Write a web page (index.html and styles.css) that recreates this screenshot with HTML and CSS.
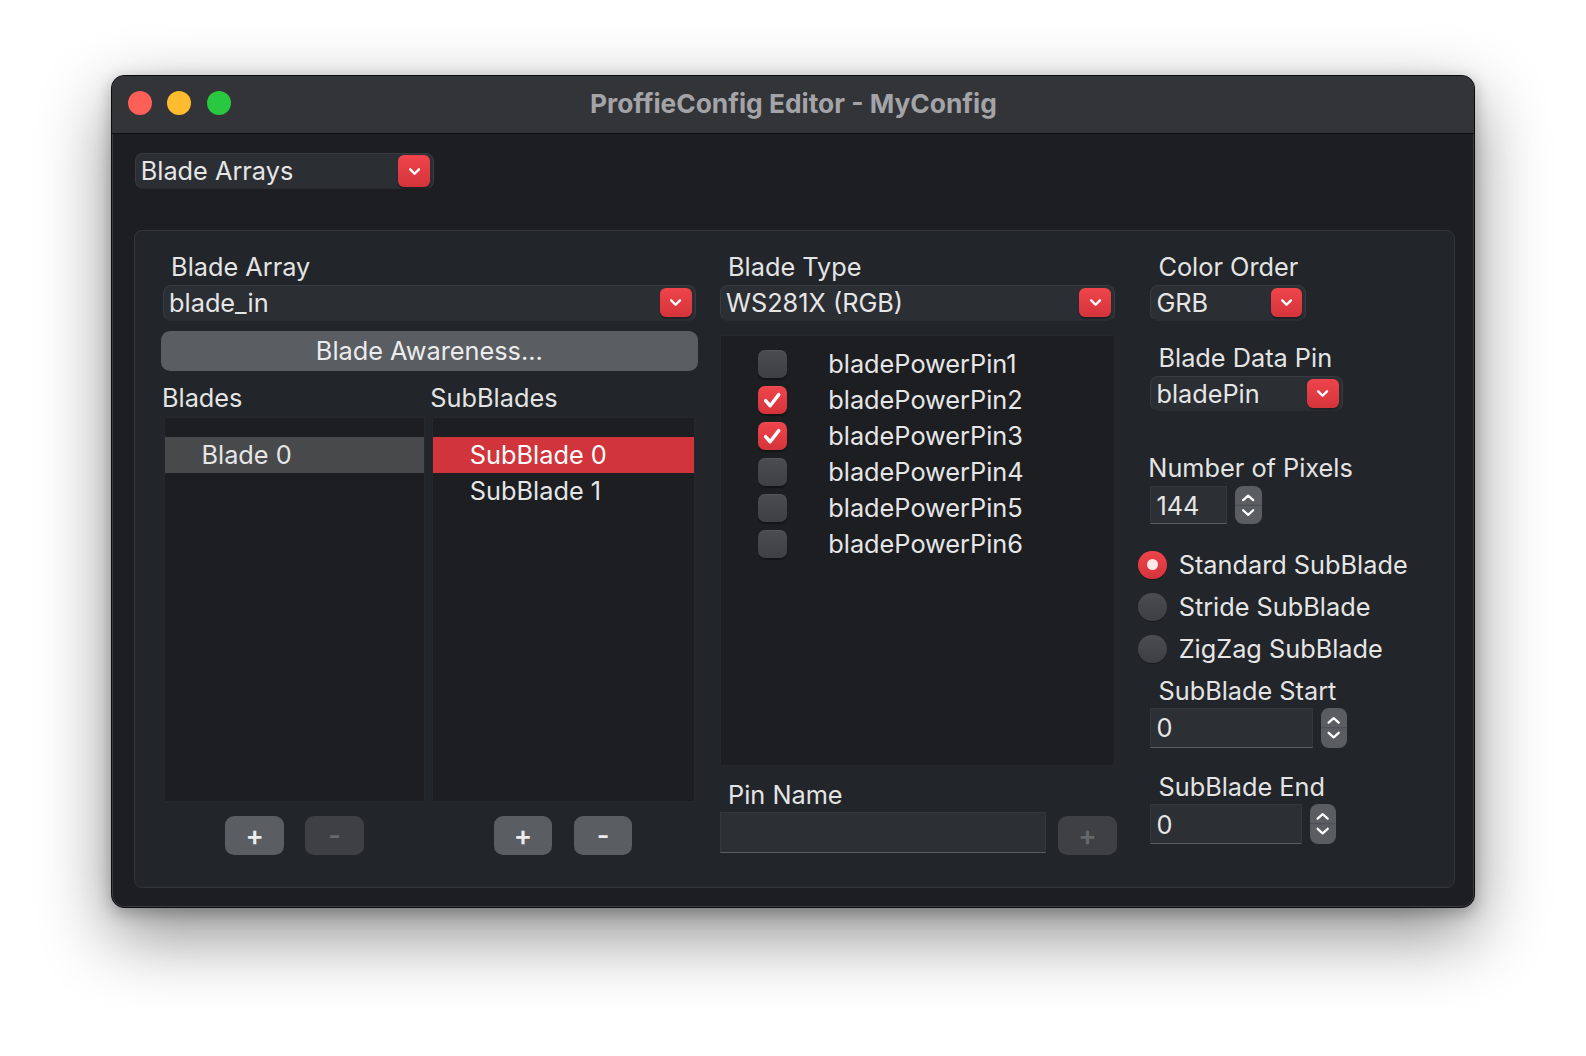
FILE: index.html
```html
<!DOCTYPE html>
<html>
<head>
<meta charset="utf-8">
<link rel="stylesheet" href="styles.css">
</head>
<body>
<div class="stage">
  <div class="window">
    <div class="titlebar">
      <div class="lights">
        <span class="light red"></span>
        <span class="light yellow"></span>
        <span class="light green"></span>
      </div>
      <div class="title">ProffieConfig Editor - MyConfig</div>
    </div>
    <div class="content">
      <div class="combo top-combo">
        <span class="combo-text">Blade Arrays</span>
        <span class="combo-btn"><svg viewBox="0 0 12 8" width="13" height="9"><path d="M2 2 L6 6 L10 2" fill="none" stroke="#fff" stroke-width="2.2" stroke-linecap="round" stroke-linejoin="round"/></svg></span>
      </div>

      <div class="group">
        <div class="col-left">
          <div class="label">Blade Array</div>
          <div class="combo array-combo">
            <span class="combo-text">blade_in</span>
            <span class="combo-btn"><svg viewBox="0 0 12 8" width="13" height="9"><path d="M2 2 L6 6 L10 2" fill="none" stroke="#fff" stroke-width="2.2" stroke-linecap="round" stroke-linejoin="round"/></svg></span>
          </div>
          <div class="btn awareness">Blade Awareness...</div>
          <div class="lists">
            <div class="list-col">
              <div class="list-label">Blades</div>
              <div class="list list-blades">
                <div class="row sel-gray">Blade 0</div>
              </div>
              <div class="btn-row">
                <div class="btn small">+</div>
                <div class="btn small disabled">-</div>
              </div>
            </div>
            <div class="list-col">
              <div class="list-label">SubBlades</div>
              <div class="list list-sub">
                <div class="row sel-red">SubBlade 0</div>
                <div class="row">SubBlade 1</div>
              </div>
              <div class="btn-row">
                <div class="btn small">+</div>
                <div class="btn small">-</div>
              </div>
            </div>
          </div>
        </div>

        <div class="col-mid">
          <div class="label mid-label">Blade Type</div>
          <div class="combo type-combo">
            <span class="combo-text">WS281X (RGB)</span>
            <span class="combo-btn"><svg viewBox="0 0 12 8" width="13" height="9"><path d="M2 2 L6 6 L10 2" fill="none" stroke="#fff" stroke-width="2.2" stroke-linecap="round" stroke-linejoin="round"/></svg></span>
          </div>
          <div class="checklist">
            <div class="check-row"><span class="cb"></span><span>bladePowerPin1</span></div>
            <div class="check-row"><span class="cb on"><svg viewBox="0 0 28 28" width="28" height="28"><path d="M7.5 14.5 L12 19.5 L20.5 8.5" fill="none" stroke="#fff" stroke-width="3.4" stroke-linecap="round" stroke-linejoin="round"/></svg></span><span>bladePowerPin2</span></div>
            <div class="check-row"><span class="cb on"><svg viewBox="0 0 28 28" width="28" height="28"><path d="M7.5 14.5 L12 19.5 L20.5 8.5" fill="none" stroke="#fff" stroke-width="3.4" stroke-linecap="round" stroke-linejoin="round"/></svg></span><span>bladePowerPin3</span></div>
            <div class="check-row"><span class="cb"></span><span>bladePowerPin4</span></div>
            <div class="check-row"><span class="cb"></span><span>bladePowerPin5</span></div>
            <div class="check-row"><span class="cb"></span><span>bladePowerPin6</span></div>
          </div>
          <div class="label mid-label pin-label">Pin Name</div>
          <div class="pin-row">
            <div class="input pin-input"></div>
            <div class="btn small disabled plus-dis">+</div>
          </div>
        </div>

        <div class="col-right">
          <div class="label r-label">Color Order</div>
          <div class="combo color-combo">
            <span class="combo-text">GRB</span>
            <span class="combo-btn"><svg viewBox="0 0 12 8" width="13" height="9"><path d="M2 2 L6 6 L10 2" fill="none" stroke="#fff" stroke-width="2.2" stroke-linecap="round" stroke-linejoin="round"/></svg></span>
          </div>
          <div class="label r-label data-label">Blade Data Pin</div>
          <div class="combo data-combo">
            <span class="combo-text">bladePin</span>
            <span class="combo-btn"><svg viewBox="0 0 12 8" width="13" height="9"><path d="M2 2 L6 6 L10 2" fill="none" stroke="#fff" stroke-width="2.2" stroke-linecap="round" stroke-linejoin="round"/></svg></span>
          </div>
          <div class="label pixels-label">Number of Pixels</div>
          <div class="spin-row pixels-row">
            <div class="input spin-input w76">144</div>
            <div class="stepper">
              <svg viewBox="0 0 26 38" width="26" height="38"><path d="M8 14 L13 9.5 L18 14" fill="none" stroke="#fff" stroke-width="2.2" stroke-linecap="round" stroke-linejoin="round"/><line x1="0" y1="19" x2="26" y2="19" stroke="#4a4d51" stroke-width="1"/><path d="M8 24 L13 28.5 L18 24" fill="none" stroke="#fff" stroke-width="2.2" stroke-linecap="round" stroke-linejoin="round"/></svg>
            </div>
          </div>
          <div class="radios">
            <div class="radio-row"><span class="radio on"><span class="dot"></span></span><span>Standard SubBlade</span></div>
            <div class="radio-row"><span class="radio"></span><span>Stride SubBlade</span></div>
            <div class="radio-row"><span class="radio"></span><span>ZigZag SubBlade</span></div>
          </div>
          <div class="label r-label start-label">SubBlade Start</div>
          <div class="spin-row">
            <div class="input spin-input w161">0</div>
            <div class="stepper s25">
              <svg viewBox="0 0 25 39" width="25" height="39"><path d="M7.5 14.5 L12.5 10 L17.5 14.5" fill="none" stroke="#fff" stroke-width="2.2" stroke-linecap="round" stroke-linejoin="round"/><line x1="0" y1="19.5" x2="25" y2="19.5" stroke="#4a4d51" stroke-width="1"/><path d="M7.5 24.5 L12.5 29 L17.5 24.5" fill="none" stroke="#fff" stroke-width="2.2" stroke-linecap="round" stroke-linejoin="round"/></svg>
            </div>
          </div>
          <div class="label r-label end-label">SubBlade End</div>
          <div class="spin-row">
            <div class="input spin-input w150">0</div>
            <div class="stepper s25">
              <svg viewBox="0 0 25 39" width="25" height="39"><path d="M7.5 14.5 L12.5 10 L17.5 14.5" fill="none" stroke="#fff" stroke-width="2.2" stroke-linecap="round" stroke-linejoin="round"/><line x1="0" y1="19.5" x2="25" y2="19.5" stroke="#4a4d51" stroke-width="1"/><path d="M7.5 24.5 L12.5 29 L17.5 24.5" fill="none" stroke="#fff" stroke-width="2.2" stroke-linecap="round" stroke-linejoin="round"/></svg>
            </div>
          </div>
        </div>
      </div>
    </div>
  </div>
</div>
</body>
</html>
```

FILE: styles.css
```css
* { box-sizing: border-box; }
body {
  margin: 0;
  padding: 0;
  background: #ffffff;
  font-family: "Inter", "Noto Sans", sans-serif;
  color: #e4e4e5;
  overflow: hidden;
}
.stage {
  zoom: 1.0127;
  padding: 74px 0 0 110px;
  height: 1000px;
}
.window {
  width: 1347px;
  height: 823px;
  border-radius: 13px;
  border: 1px solid #0b0b0c;
  background: #1c1e22;
  box-shadow: 0 26px 70px rgba(0,0,0,0.45), 0 4px 16px rgba(0,0,0,0.25), inset 0 0 0 1px rgba(255,255,255,0.14);
  overflow: hidden;
  display: flex;
  flex-direction: column;
}
.titlebar {
  height: 57px;
  flex: none;
  background: #333438;
  border-bottom: 1px solid #0d0e10;
  display: flex;
  align-items: center;
  position: relative;
}
.lights {
  display: flex;
  gap: 15px;
  padding-left: 15px;
  padding-bottom: 2px;
}
.light {
  width: 24px;
  height: 24px;
  border-radius: 50%;
  display: block;
}
.light.red { background: #fe5f57; }
.light.yellow { background: #febc2e; }
.light.green { background: #28c840; }
.title {
  position: absolute;
  left: 0;
  right: 0;
  top: 0;
  bottom: 2px;
  display: flex;
  align-items: center;
  justify-content: center;
  font-weight: 700;
  font-size: 26px;
  color: #a4a4a8;
  pointer-events: none;
}
.content {
  padding: 19px 0 0 21px;
  flex: 1;
}
.combo {
  height: 36px;
  background: #2b2e33;
  border: 1px solid #383b40;
  border-bottom-color: #2a2d31;
  border-radius: 8px;
  display: flex;
  align-items: center;
  justify-content: space-between;
  padding: 0 3px 0 5px;
  font-size: 25px;
  color: #e6e6e7;
}
.combo-text { line-height: 1; }
.combo-btn {
  width: 31px;
  height: 29px;
  border-radius: 6px;
  background: linear-gradient(#ef444b, #d5343b);
  display: flex;
  align-items: center;
  justify-content: center;
  box-shadow: 0 1px 1px rgba(0,0,0,0.3);
}
.top-combo {
  width: 296px;
  margin-left: 1px;
}
.top-combo .combo-btn { width: 32px; height: 31px; }
.group {
  margin-top: 40px;
  width: 1305px;
  height: 650px;
  background: #222529;
  border: 1px solid #33363a;
  border-radius: 8px;
  display: flex;
  padding: 21px 0 0 26px;
}
.label {
  font-size: 25px;
  line-height: 30px;
  height: 30px;
  padding-left: 10px;
  margin-bottom: 2px;
  white-space: nowrap;
}
.col-left { width: 530px; flex: none; }
.array-combo { width: 526px; margin-left: 2px; }
.btn {
  background: #5a5d61;
  border-radius: 9px;
  color: #ececed;
  font-size: 25px;
  display: flex;
  align-items: center;
  justify-content: center;
}
.awareness {
  height: 39px;
  margin-top: 10px;
  width: 530px;
}
.lists {
  display: grid;
  grid-template-columns: 265px 265px;
  margin-top: 12px;
}
.list-label {
  font-size: 25px;
  line-height: 30px;
  height: 30px;
  padding-left: 1px;
  margin-bottom: 4px;
}
.list {
  margin-left: 3px;
  height: 380px;
  background: #1c1e22;
  border: 1px solid #25282c;
  padding-top: 19px;
}
.list-blades { width: 258px; }
.list-sub { width: 259px; }
.row {
  height: 35px;
  line-height: 35px;
  padding-left: 36px;
  font-size: 25px;
  color: #e6e6e7;
}
.sel-gray { background: #48494b; }
.sel-red { background: #d1343a; color: #ffffff; }
.btn-row {
  display: flex;
  justify-content: center;
  gap: 21px;
  margin-top: 14px;
  margin-left: 3px;
  width: 258px;
}
.btn.small {
  width: 58px;
  height: 38px;
  font-size: 27px;
  font-weight: 600;
  border-radius: 9px;
}
.btn.disabled {
  background: #3e4044;
  color: #66686c;
}
.col-mid {
  width: 392px;
  flex: none;
  margin-left: 22px;
}
.mid-label { padding-left: 8px; }
.type-combo { width: 390px; }
.checklist {
  margin-top: 14px;
  width: 390px;
  height: 425px;
  background: #1c1e22;
  border: 1px solid #25282c;
  padding-top: 9.5px;
}
.check-row {
  height: 35.6px;
  display: flex;
  align-items: center;
  font-size: 25px;
  padding-left: 37px;
  gap: 41px;
  color: #e6e6e7;
}
.cb {
  width: 28px;
  height: 28px;
  border-radius: 7px;
  background: linear-gradient(#4b4c4f, #3f4043);
  box-shadow: inset 0 1px 0 rgba(255,255,255,0.06), 0 1px 1px rgba(0,0,0,0.3);
  flex: none;
  display: block;
}
.cb svg { display: block; }
.cb.on { background: linear-gradient(#ef444b, #d5343b); }
.pin-label { margin-top: 14px; }
.pin-row {
  display: flex;
  align-items: flex-start;
  gap: 12px;
  margin-top: 1px;
}
.input {
  background: #2c2f33;
  border: 1px solid #34373b;
  border-bottom: 1px solid #5a5d61;
  font-size: 25px;
  color: #e6e6e7;
  display: flex;
  align-items: center;
  padding-left: 5px;
}
.pin-input { width: 322px; height: 40px; }
.plus-dis { margin-top: 4px; font-weight: 400; }
.col-right {
  flex: none;
  margin-left: 21px;
  width: 280px;
}
.r-label { padding-left: 20px; }
.color-combo { width: 154px; margin-left: 12px; }
.data-label { margin-top: 22px; }
.data-combo { width: 190px; height: 35px; margin-left: 12px; }
.pixels-label { margin-top: 41px; padding-left: 10px; margin-bottom: 3px; }
.spin-row {
  display: flex;
  gap: 8px;
  margin-left: 12px;
  align-items: flex-start;
}
.spin-input { height: 38px; }
.w76 { width: 76px; }
.w161 { width: 161px; height: 39px; }
.w150 { width: 150px; height: 39px; }
.stepper {
  width: 26px;
  height: 38px;
  border-radius: 8px;
  background: #5a5d61;
  overflow: hidden;
}
.stepper svg { display: block; }
.stepper.s25 { width: 25px; height: 39px; }
.radios { margin-top: 19px; }
.radio-row {
  height: 41.5px;
  display: flex;
  align-items: center;
  gap: 12px;
  font-size: 25px;
  color: #e6e6e7;
}
.radio {
  width: 28px;
  height: 28px;
  border-radius: 50%;
  background: linear-gradient(#4b4c4f, #3e3f42);
  flex: none;
  display: flex;
  align-items: center;
  justify-content: center;
  box-shadow: 0 1px 1px rgba(0,0,0,0.3);
}
.radio.on { background: linear-gradient(#ef444b, #d5343b); }
.dot {
  width: 11px;
  height: 11px;
  border-radius: 50%;
  background: #fde8ea;
}
.start-label { margin-top: 6px; }
.end-label { margin-top: 24px; }
```
